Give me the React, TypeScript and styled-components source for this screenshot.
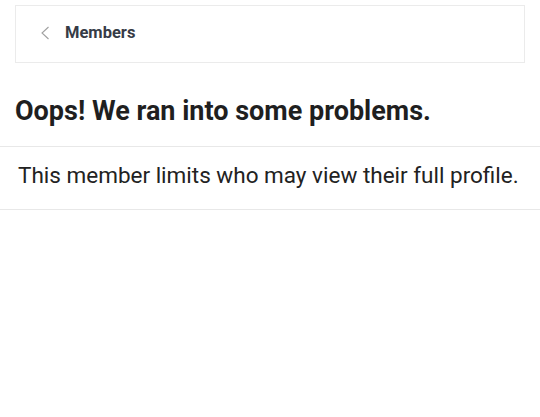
import React from 'react';
import styled, { createGlobalStyle } from 'styled-components';

const GlobalStyle = createGlobalStyle`
  html, body {
    margin: 0;
    padding: 0;
    background: #ffffff;
    font-family: Roboto, "Liberation Sans", Arial, sans-serif;
  }
`;

const Page = styled.div`
  width: 540px;
  display: flex;
  flex-direction: column;
`;

const NavBar = styled.div`
  box-sizing: border-box;
  height: 58px;
  margin: 5px 15px 0 15px;
  border: 1px solid #ebebeb;
  display: flex;
  align-items: center;
  padding: 0 0 3px 24px;
  gap: 15px;
`;

const BackButton = styled.button`
  border: 0;
  background: none;
  padding: 0;
  width: 10px;
  height: 14px;
  display: flex;
  align-items: center;
  justify-content: center;
  cursor: pointer;
`;

const NavTitle = styled.span`
  font-size: 16.5px;
  font-weight: 700;
  color: #363b46;
`;

const Heading = styled.h1`
  margin: 0;
  padding: 31px 15px 18px 15px;
  font-size: 27px;
  font-weight: 700;
  line-height: 34px;
  color: #1f1f1f;
  border-bottom: 1px solid #e8e8e8;
`;

const Message = styled.p`
  margin: 0;
  padding: 13px 18px 18px 18px;
  font-size: 22.5px;
  line-height: 31px;
  color: #222222;
  white-space: nowrap;
  border-bottom: 1px solid #e8e8e8;
`;

export default function App() {
  return (
    <Page>
      <GlobalStyle />
      <NavBar>
        <BackButton aria-label="Back">
          <svg width="10" height="14" viewBox="0 0 10 14" fill="none">
            <path d="M8.5 1 L2 7 L8.5 13" stroke="#a0a0a0" strokeWidth="1.1" />
          </svg>
        </BackButton>
        <NavTitle>Members</NavTitle>
      </NavBar>
      <Heading>Oops! We ran into some problems.</Heading>
      <Message>This member limits who may view their full profile.</Message>
    </Page>
  );
}
